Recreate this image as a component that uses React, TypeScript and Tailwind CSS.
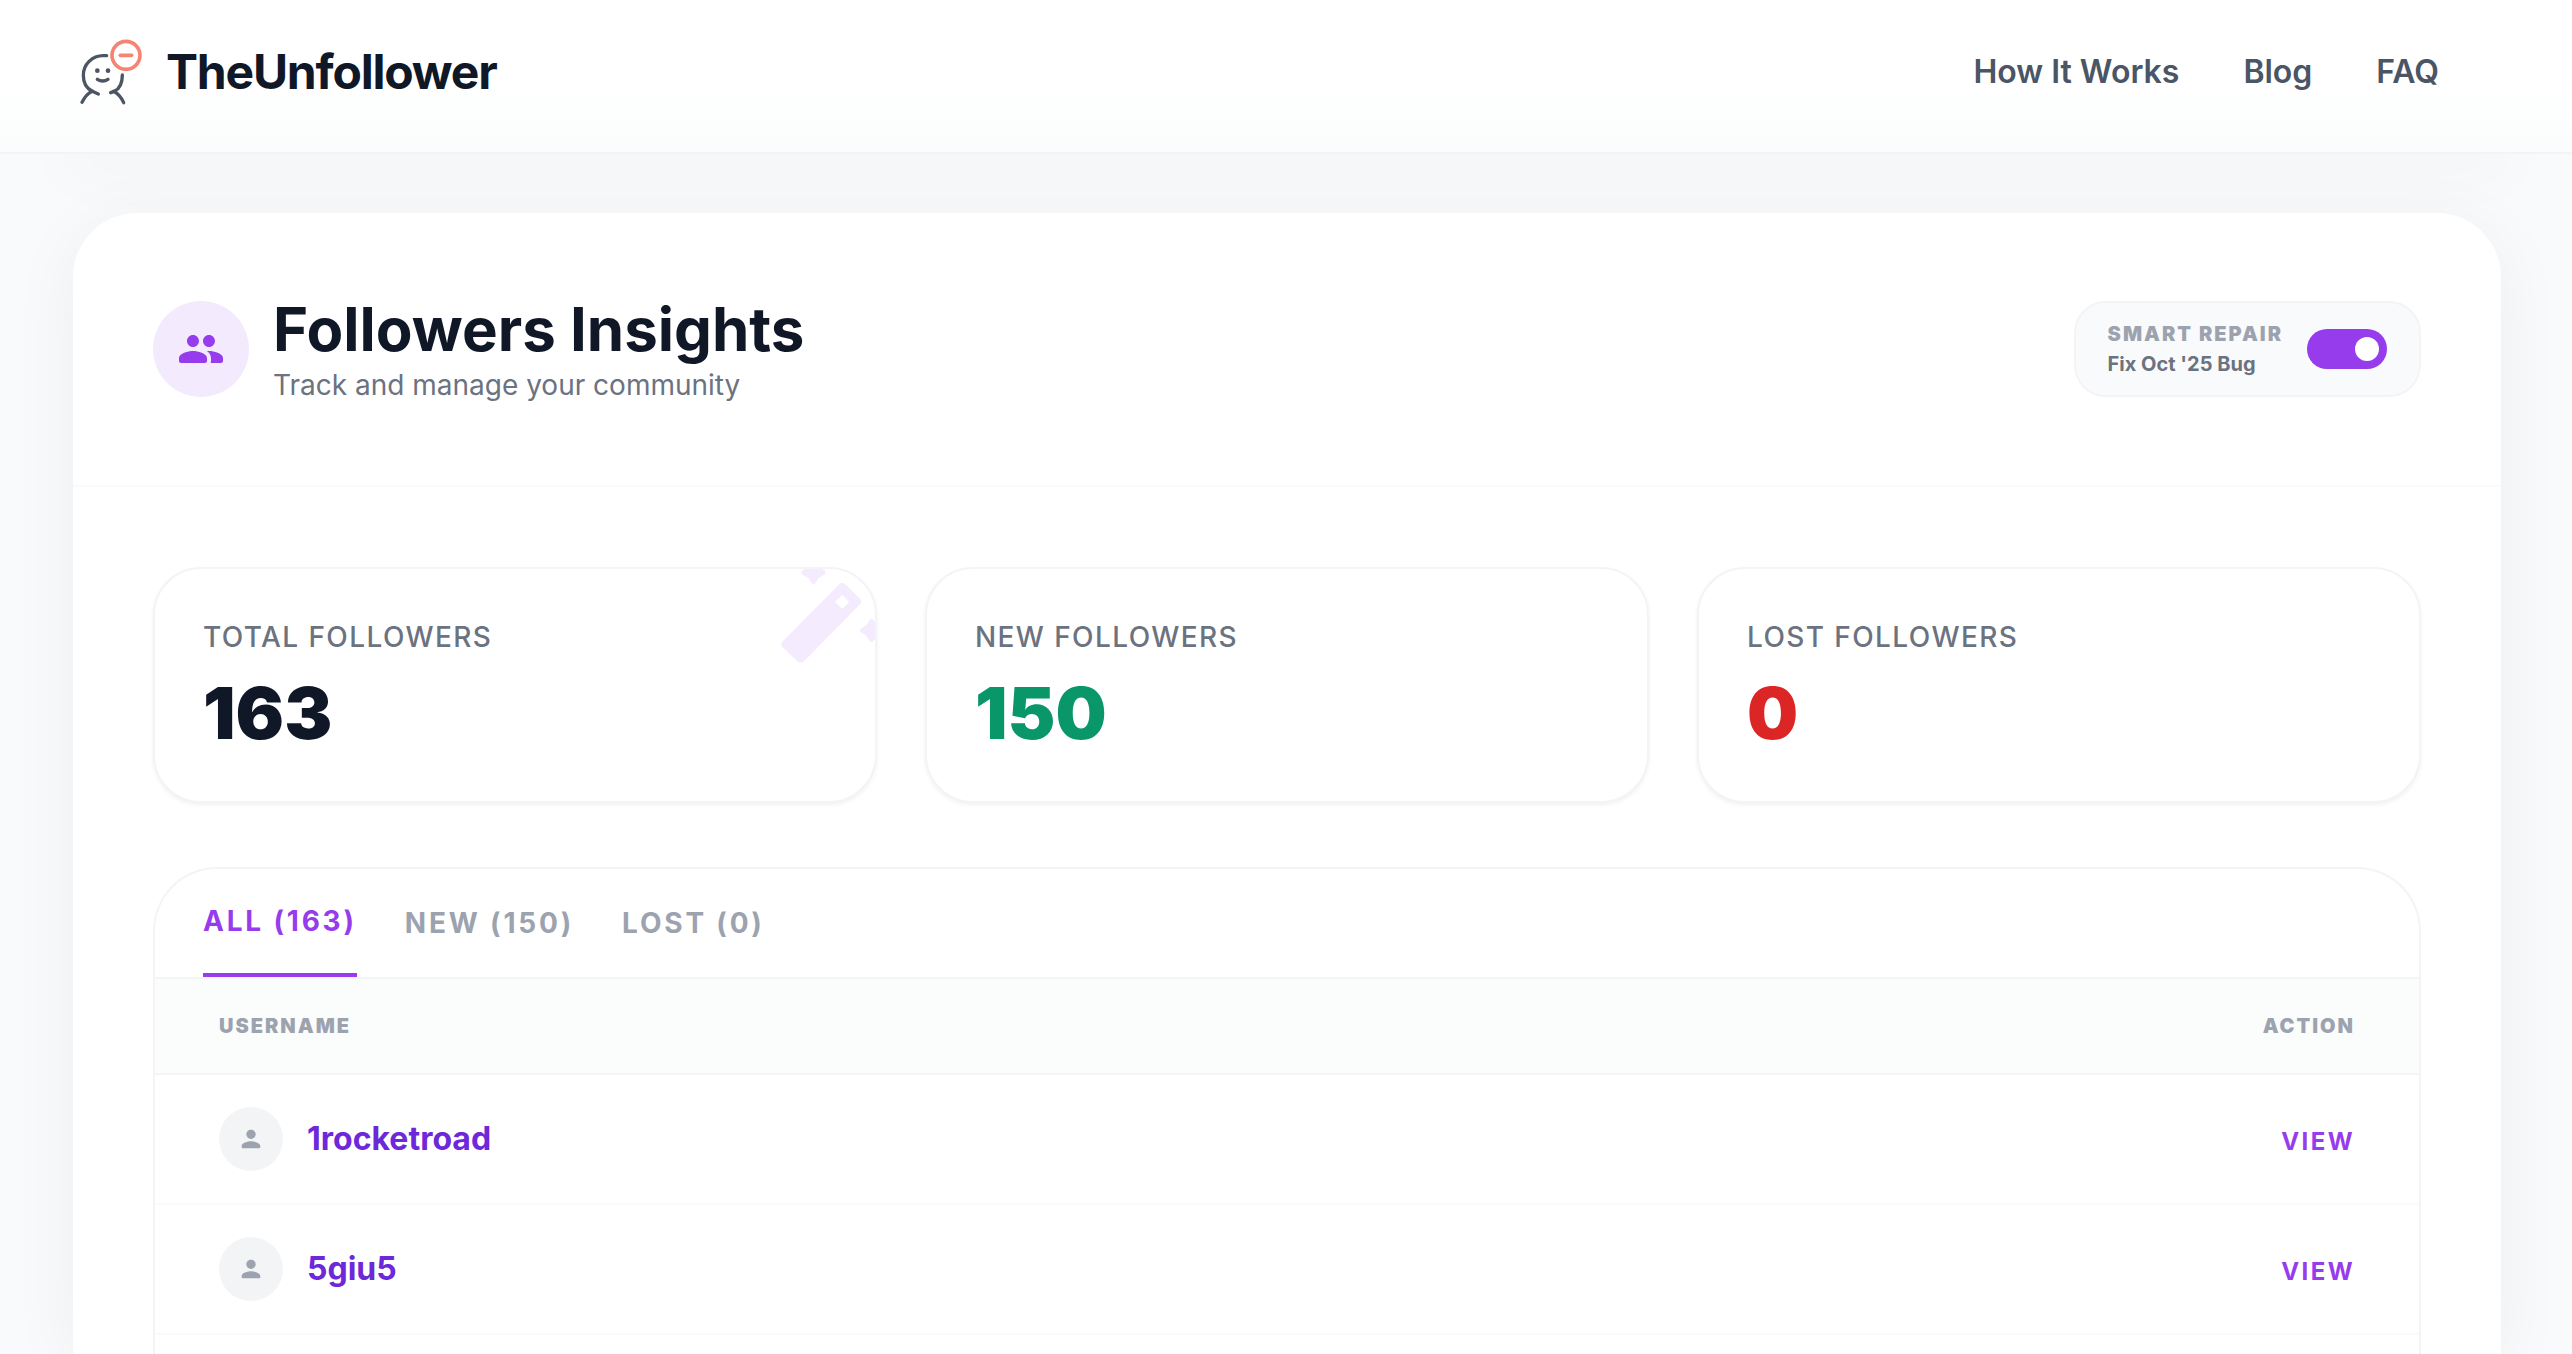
import { useState } from "react";
import { clsx } from "clsx";

type Stat = {
  label: string;
  value: number;
  color: string;
  magic?: boolean;
}

type Tab = {
  id: string;
  label: string;
}

const navLinks = ["How It Works", "Blog", "FAQ"];

const stats: Stat[] = [
  { label: "Total Followers", value: 163, color: "text-[#101828]", magic: true },
  { label: "New Followers", value: 150, color: "text-[#099668]" },
  { label: "Lost Followers", value: 0, color: "text-[#dc2626]" },
];

const tabs: Tab[] = [
  { id: "all", label: "All (163)" },
  { id: "new", label: "New (150)" },
  { id: "lost", label: "Lost (0)" },
];

const users = ["1rocketroad", "5giu5"];

const Logo = () => (
  <svg className="size-20" viewBox="0 6 240 240" fill="none" strokeLinecap="round" strokeLinejoin="round" aria-hidden="true">
    <g stroke="#4b5563" strokeWidth="10">
      <path d="M110 77H100C66 77 40 103 40 136C40 158 50 176 67 184L85 192" />
      <path d="M36 217C43 203 53 190 67 184" />
      <path d="M157 135C157 159 148 177 133 184L122 188" />
      <path d="M131 184C147 192 154 203 161 218" />
      <path d="M82 148Q98 158 114 148" />
    </g>
    <circle cx="82" cy="122" r="7" fill="#4b5563" />
    <circle cx="114" cy="122" r="7" fill="#4b5563" />
    <circle cx="168" cy="76" r="42" stroke="#f58472" strokeWidth="11" />
    <path d="M151 76H185" stroke="#f58472" strokeWidth="11" />
  </svg>
);

const GroupIcon = () => (
  <svg className="size-12" viewBox="0 0 24 24" fill="currentColor" aria-hidden="true">
    <path d="M16 11c1.66 0 2.99-1.34 2.99-3S17.66 5 16 5s-3 1.34-3 3 1.34 3 3 3zm-8 0c1.66 0 2.99-1.34 2.99-3S9.66 5 8 5 5 6.34 5 8s1.34 3 3 3zm0 2c-2.33 0-7 1.17-7 3.5V18c0 .55.45 1 1 1h12c.55 0 1-.45 1-1v-1.5c0-2.33-4.67-3.5-7-3.5zm8 0c-.29 0-.62.02-.97.05.02.01.03.03.04.04 1.14.83 1.93 1.94 1.93 3.41V18c0 .35-.07.69-.18 1H22c.55 0 1-.45 1-1v-1.5c0-2.33-4.67-3.5-7-3.5z" />
  </svg>
);

const PersonIcon = () => (
  <svg className="size-7" viewBox="0 0 24 24" fill="currentColor" aria-hidden="true">
    <path d="M12 12c2.21 0 4-1.79 4-4s-1.79-4-4-4-4 1.79-4 4 1.79 4 4 4zm0 2c-2.67 0-8 1.34-8 4v1c0 .55.45 1 1 1h14c.55 0 1-.45 1-1v-1c0-2.66-5.33-4-8-4z" />
  </svg>
);

// wand in the corner of the first card, the sparks run past its edges
const WandIcon = () => (
  <svg className="absolute top-0 right-0 size-32 text-[#f4ebfe]" viewBox="0 0 128 128" fill="currentColor" stroke="currentColor" strokeWidth="5" strokeLinejoin="round" aria-hidden="true">
    <path stroke="none" fillRule="evenodd" d="M92 15.5Q95.300 12.200 98.600 15.500L112.500 29.200Q115.800 32.500 112.500 35.800L57 92.200Q53.700 95.500 50.400 92.200L36 78.500Q32.700 75.200 36 71.900ZM95.300 26L88 33L95.300 40L102.300 33Z" />
    <path d="M66.500-6L70 0L76 3.500L70 7L66.500 12.500L63 7L57 3.500L63 0Z" />
    <path d="M124.500 52.500L128 58L134 61.500L128 65L124.500 70.500L121 65L115.500 61.500L121 58Z" />
  </svg>
);

const Header = () => (
  <header className="relative z-10 border-b-2 border-[#f3f4f6] bg-linear-to-b from-white via-white to-[#fbfdfc] shadow-[0_80px_60px_-60px_rgba(0,0,0,0.03)]">
    <div className="flex items-center justify-between pt-8 pr-[69px] pb-10 pl-[70px]">
      <a href="#" className="flex items-center gap-4">
        <Logo />
        <span className="text-5xl font-bold tracking-tight text-[#101828]">TheUnfollower</span>
      </a>
      <nav className="flex gap-16 pr-16">
        {navLinks.map((link) => (
          <a key={link} href="#" className="text-[32px] leading-12 font-semibold text-[#4a5565]">{link}</a>
        ))}
      </nav>
    </div>
  </header>
);

const SmartRepair = () => {
  const [enabled, setEnabled] = useState(true);

  return (
    <label className="flex h-24 items-center gap-6 rounded-[32px] border-2 border-[#f3f4f6] bg-[#f9fafb] px-8">
      <span className="flex flex-col">
        <span className="text-xl leading-[30px] font-black tracking-widest text-[#9ca3af] uppercase">Smart Repair</span>
        <span className="text-xl leading-[30px] font-bold text-[#6b7280]">Fix Oct '25 Bug</span>
      </span>
      <input
        type="checkbox"
        role="switch"
        checked={enabled}
        onChange={(e) => setEnabled(e.target.checked)}
        className="flex h-10 w-20 appearance-none items-center rounded-full bg-gray-300 px-2 before:size-6 before:rounded-full before:bg-white checked:justify-end checked:bg-[#963cec]"
      />
    </label>
  );
}

const StatCard = ({ stat }: { stat: Stat }) => (
  <div className="relative flex flex-col gap-4 overflow-hidden rounded-[48px] border-2 border-[#f3f4f6] bg-white p-12 shadow-[0_2px_4px_rgba(0,0,0,0.06)]">
    {stat.magic && <WandIcon />}
    <p className="text-[28px] leading-10 font-medium tracking-wider text-[#6b7280] uppercase">{stat.label}</p>
    <p className={clsx("text-7xl leading-20 font-black", stat.color)}>{stat.value}</p>
  </div>
);

const Followers = () => {
  const [active, setActive] = useState("all");

  return (
    <section className="flex-1 overflow-hidden rounded-t-[64px] border-2 border-b-0 border-[#f3f4f6] bg-white">
      <div className="flex gap-12 border-b-2 border-[#f3f4f6] px-12">
        {tabs.map((tab) => (
          <button
            key={tab.id}
            type="button"
            onClick={() => setActive(tab.id)}
            className={clsx(
              "py-8 text-[28px] leading-10 font-bold tracking-widest uppercase",
              active === tab.id ? "border-b-4 border-[#963cec] text-[#963cec]" : "text-[#9ca3af]"
            )}
          >
            {tab.label}
          </button>
        ))}
      </div>
      <table className="w-full border-separate border-spacing-0">
        <thead className="bg-[#fbfdfc] text-xl leading-[30px] text-[#9ca3af] uppercase">
          <tr>
            <th className="border-b-2 border-[#f3f4f6] px-16 py-8 text-left font-black tracking-widest">Username</th>
            <th className="border-b-2 border-[#f3f4f6] px-16 py-8 text-right font-black tracking-widest">Action</th>
          </tr>
        </thead>
        <tbody>
          {users.map((user) => (
            <tr key={user} className="text-[32px] leading-12">
              <td className="border-b-2 border-[#f9fafb] px-16 py-8">
                <div className="flex items-center gap-6">
                  <span className="flex size-16 items-center justify-center rounded-full bg-[#f3f4f6] text-[#9ca3af]">
                    <PersonIcon />
                  </span>
                  <a href="#" className="font-bold text-[#6d28d9]">{user}</a>
                </div>
              </td>
              <td className="border-b-2 border-[#f9fafb] px-16 py-8 text-right">
                <a href="#" className="text-2xl font-bold tracking-widest text-[#963cec] uppercase">View</a>
              </td>
            </tr>
          ))}
        </tbody>
      </table>
    </section>
  );
}

export default function App() {
  return (
    <div className="flex h-screen flex-col overflow-hidden bg-[#f9fafb] font-['Inter',sans-serif]">
      <Header />
      <main className="flex flex-1 flex-col pt-[59px] pr-[71px] pl-[73px]">
        <div className="flex flex-1 flex-col rounded-t-[64px] bg-white shadow-[0_10px_70px_rgba(0,0,0,0.05)]">
          <div className="flex items-center justify-between border-b-2 border-[#f9fafb] p-20">
            <div className="flex items-center gap-6">
              <span className="flex size-24 items-center justify-center rounded-full bg-[#f3eafd] text-[#963cec]">
                <GroupIcon />
              </span>
              <div>
                <h1 className="text-6xl leading-18 font-bold text-[#101828]">Followers Insights</h1>
                <p className="text-[28px] leading-10 text-[#6b7280]">Track and manage your community</p>
              </div>
            </div>
            <SmartRepair />
          </div>
          <div className="flex flex-1 flex-col gap-16 px-20 pt-20">
            <div className="grid grid-cols-3 gap-12">
              {stats.map((stat) => (
                <StatCard key={stat.label} stat={stat} />
              ))}
            </div>
            <Followers />
          </div>
        </div>
      </main>
    </div>
  );
}
